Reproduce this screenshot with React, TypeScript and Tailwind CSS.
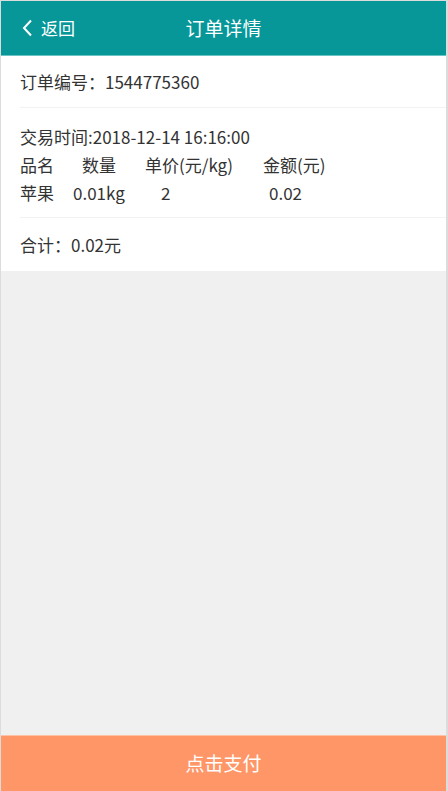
import React from "react";

const font = { fontFamily: '"Noto Sans CJK SC", "Noto Sans", sans-serif' };

export default function App() {
  return (
    <div
      className="h-[791px] w-[448px] flex flex-col bg-[#f0f0f0] border-l border-t border-r-2 border-[#dcdcdc] overflow-hidden"
      style={font}
    >
      <div className="h-[55px] bg-[#079799] border-b border-[#6cc3c4] flex items-center relative shrink-0">
        <div className="flex items-center pl-[20px] text-white text-[17px]">
          <svg width="12" height="18" viewBox="0 0 12 18" className="mr-[8px]">
            <path d="M10 1.5 L3 9 L10 16.5" fill="none" stroke="white" strokeWidth="2" />
          </svg>
          <span>返回</span>
        </div>
        <div className="absolute left-0 right-0 text-center text-white text-[19px] pointer-events-none">
          订单详情
        </div>
      </div>
      <div className="bg-white text-[#333] text-[17px] shrink-0">
        <div className="h-[51px] flex items-center pl-[19px]">订单编号：1544775360</div>
        <div className="ml-[19px] border-t border-[#f2f2f2]" />
        <div className="pl-[19px] pt-[15px] pb-[10px] leading-[28px]">
          <div>交易时间:2018-12-14 16:16:00</div>
          <div className="flex">
            <span className="w-[62px]">品名</span>
            <span className="w-[63px]">数量</span>
            <span className="w-[118px]">单价(元/kg)</span>
            <span>金额(元)</span>
          </div>
          <div className="flex">
            <span className="w-[53px]">苹果</span>
            <span className="w-[88px]">0.01kg</span>
            <span className="w-[108px]">2</span>
            <span>0.02</span>
          </div>
        </div>
        <div className="ml-[19px] border-t border-[#f2f2f2]" />
        <div className="h-[53px] flex items-center pl-[19px]">合计：0.02元</div>
      </div>
      <div className="flex-1" />
      <div className="h-[56px] bg-[#ff9668] border-t border-[#ffc2a6] flex items-center justify-center text-white text-[19px] shrink-0">
        点击支付
      </div>
    </div>
  );
}
